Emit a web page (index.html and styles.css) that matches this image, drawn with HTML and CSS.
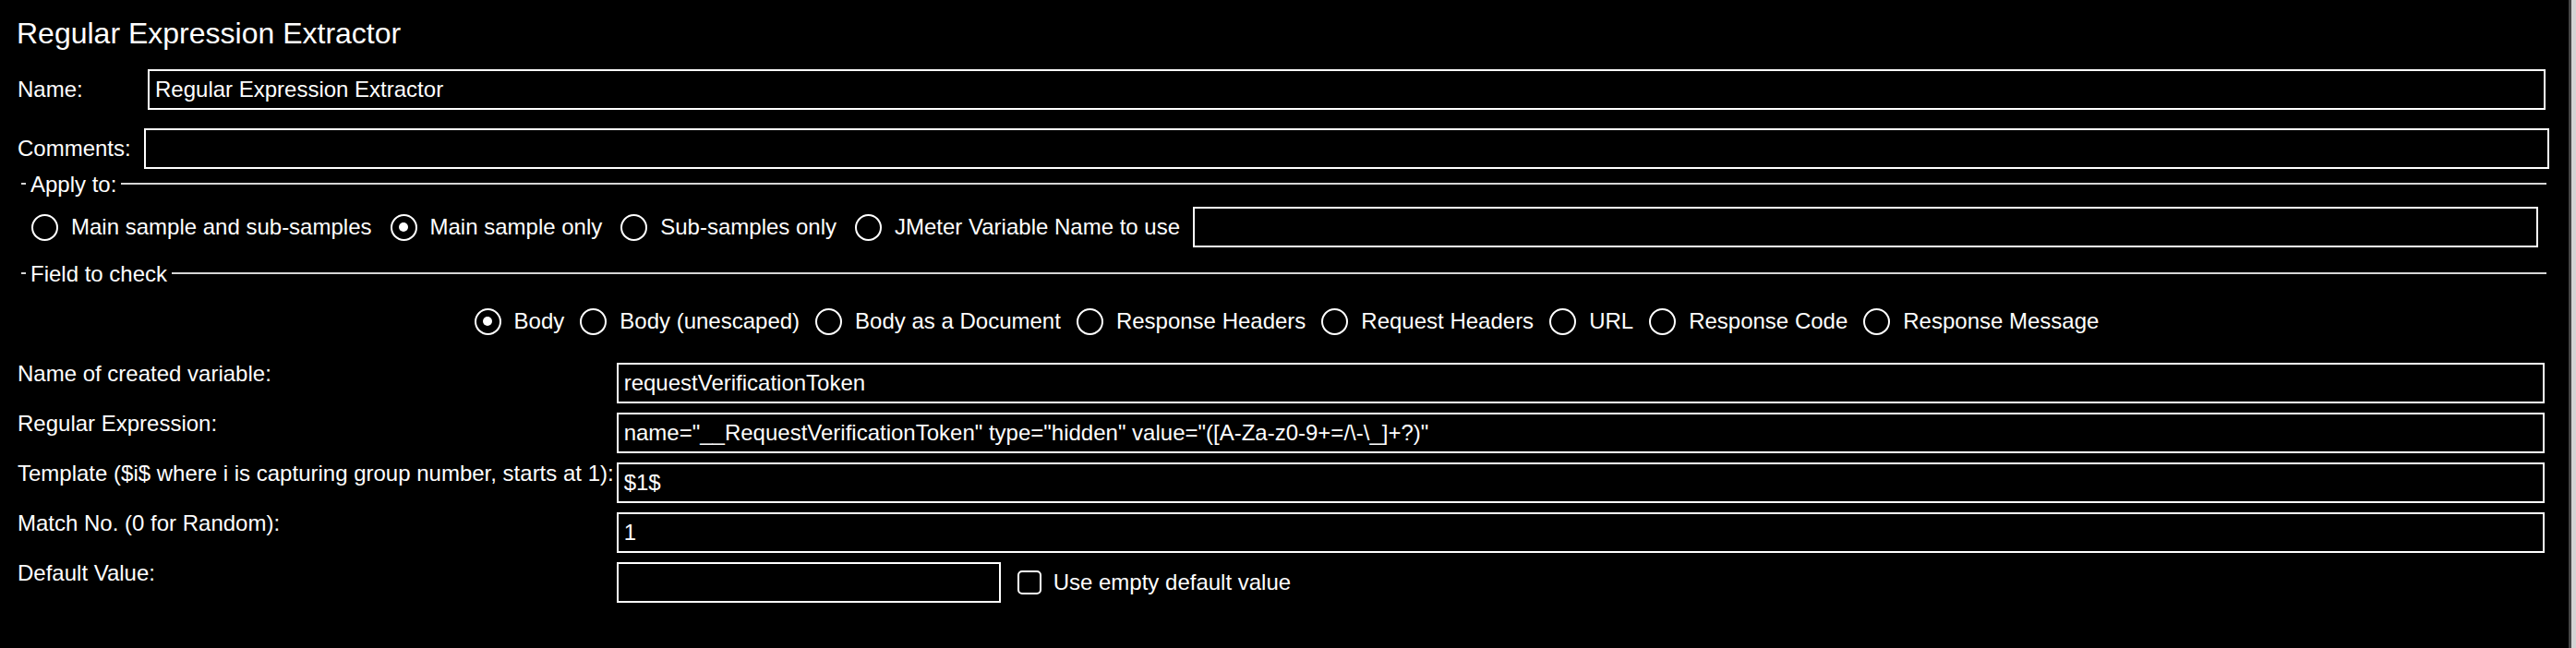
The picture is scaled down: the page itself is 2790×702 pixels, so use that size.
FILE: index.html
```html
<!DOCTYPE html>
<html lang="en">
<head>
<meta charset="utf-8">
<title>Regular Expression Extractor</title>
<link rel="stylesheet" href="styles.css">
</head>
<body>
<div class="app">
  <main class="panel">
    <h1 class="title">Regular Expression Extractor</h1>

    <div class="row row-name">
      <span class="label label-name">Name:</span>
      <div class="field">Regular Expression Extractor</div>
    </div>

    <div class="row row-comments">
      <span class="label label-comments">Comments:</span>
      <div class="field"></div>
    </div>

    <div class="titled">
      <span class="dash"></span><span class="titled-text">Apply to:</span><span class="rule"></span>
    </div>

    <div class="radio-row apply-row">
      <div class="opt"><span class="radio"></span><span class="opt-text">Main sample and sub-samples</span></div>
      <div class="opt"><span class="radio checked"></span><span class="opt-text">Main sample only</span></div>
      <div class="opt"><span class="radio"></span><span class="opt-text">Sub-samples only</span></div>
      <div class="opt"><span class="radio"></span><span class="opt-text">JMeter Variable Name to use</span></div>
      <div class="field var-field"></div>
    </div>

    <div class="titled">
      <span class="dash"></span><span class="titled-text">Field to check</span><span class="rule"></span>
    </div>

    <div class="radio-row check-row">
      <div class="opt"><span class="radio checked"></span><span class="opt-text">Body</span></div>
      <div class="opt"><span class="radio"></span><span class="opt-text">Body (unescaped)</span></div>
      <div class="opt"><span class="radio"></span><span class="opt-text">Body as a Document</span></div>
      <div class="opt"><span class="radio"></span><span class="opt-text">Response Headers</span></div>
      <div class="opt"><span class="radio"></span><span class="opt-text">Request Headers</span></div>
      <div class="opt"><span class="radio"></span><span class="opt-text">URL</span></div>
      <div class="opt"><span class="radio"></span><span class="opt-text">Response Code</span></div>
      <div class="opt"><span class="radio"></span><span class="opt-text">Response Message</span></div>
    </div>

    <div class="grid">
      <span class="glabel">Name of created variable:</span>
      <div class="field">requestVerificationToken</div>

      <span class="glabel">Regular Expression:</span>
      <div class="field">name="__RequestVerificationToken" type="hidden" value="([A-Za-z0-9+=/\-\_]+?)"</div>

      <span class="glabel">Template ($i$ where i is capturing group number, starts at 1):</span>
      <div class="field">$1$</div>

      <span class="glabel">Match No. (0 for Random):</span>
      <div class="field">1</div>

      <span class="glabel">Default Value:</span>
      <div class="default-wrap">
        <div class="field default-field"></div>
        <span class="checkbox"></span>
        <span class="check-text">Use empty default value</span>
      </div>
    </div>
  </main>
  <div class="divider"></div>
</div>
</body>
</html>
```
FILE: styles.css
```css
html, body {
  margin: 0;
  padding: 0;
  background: #000;
}

body {
  font-family: "Liberation Sans", Arial, Helvetica, sans-serif;
  font-size: 24px;
  color: #fff;
}

.app {
  display: flex;
  width: 2790px;
  height: 702px;
  overflow: hidden;
}

.panel {
  flex: 1;
  padding: 20px 24px 0 19px;
  display: flex;
  flex-direction: column;
}

.title {
  margin: 0 0 0 -1px;
  font-size: 32px;
  font-weight: normal;
  line-height: 32px;
  white-space: nowrap;
}

.row {
  display: flex;
  align-items: center;
  height: 44px;
}

.row-name {
  margin-top: 23px;
  margin-right: 1px;
}

.row-comments {
  margin-top: 20px;
  margin-right: -3px;
}

.label {
  white-space: nowrap;
  line-height: 28px;
}

.label-name {
  width: 141px;
  flex: none;
}

.label-comments {
  margin-right: 14px;
  flex: none;
}

.field {
  box-sizing: border-box;
  height: 44px;
  border: 2px solid #fff;
  padding: 0 6px;
  line-height: 40px;
  white-space: nowrap;
  overflow: hidden;
  flex: 1;
  min-width: 0;
}

.titled {
  display: flex;
  align-items: center;
  height: 26px;
  padding-left: 4px;
}

.row-comments + .titled {
  margin-top: 3px;
}

.apply-row + .titled {
  margin-top: 15px;
}

.dash {
  width: 5px;
  height: 2px;
  background: #d6d6d6;
  flex: none;
}

.titled-text {
  margin: 1px 5px 0;
  line-height: 26px;
  white-space: nowrap;
}

.rule {
  flex: 1;
  height: 2px;
  background: #d6d6d6;
}

.radio-row {
  display: flex;
  align-items: center;
}

.apply-row {
  margin-top: 12px;
  height: 44px;
  padding-left: 15px;
  margin-right: 9px;
  gap: 20px;
}

.check-row {
  margin-top: 24px;
  height: 30px;
  justify-content: center;
  gap: 17px;
  padding-left: 10px;
}

.opt {
  display: flex;
  align-items: center;
  flex: none;
  white-space: nowrap;
}

.radio {
  box-sizing: border-box;
  width: 29px;
  height: 29px;
  border: 2px solid #fff;
  border-radius: 50%;
  margin-right: 14px;
  display: flex;
  align-items: center;
  justify-content: center;
  flex: none;
}

.radio.checked::after {
  content: "";
  width: 10px;
  height: 10px;
  border-radius: 50%;
  background: #fff;
}

.opt-text {
  line-height: 28px;
}

.var-field {
  margin-left: -6px;
}

.grid {
  margin-top: 30px;
  margin-right: 2px;
  display: grid;
  grid-template-columns: auto 1fr;
  column-gap: 3px;
  row-gap: 10px;
}

.glabel {
  align-self: start;
  line-height: 24px;
  white-space: nowrap;
}

.default-wrap {
  display: flex;
  align-items: center;
  height: 44px;
}

.default-field {
  flex: none;
  width: 416px;
}

.checkbox {
  box-sizing: border-box;
  width: 26px;
  height: 26px;
  border: 2px solid #fff;
  border-radius: 5px;
  margin-left: 18px;
  flex: none;
}

.check-text {
  margin-left: 13px;
  line-height: 28px;
  white-space: nowrap;
}

.divider {
  flex: none;
  width: 5px;
  border-left: 3px solid #444;
  background: #d4d4d4;
}
```
